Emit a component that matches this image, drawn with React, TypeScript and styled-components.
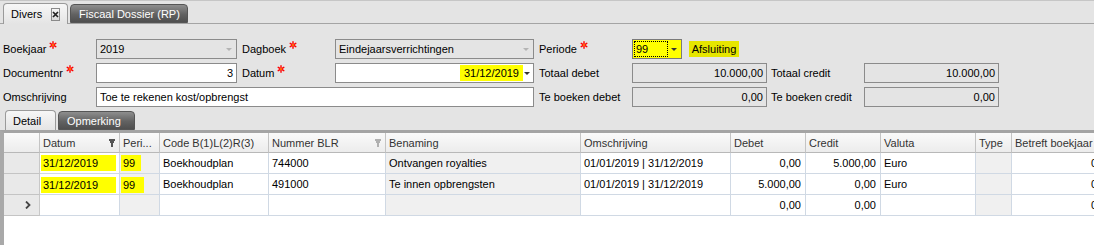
import React from "react";
import styled, { createGlobalStyle } from "styled-components";

const GlobalStyle = createGlobalStyle`
  html, body {
    margin: 0;
    padding: 0;
    background: #e4e4e4;
    overflow: hidden;
  }
  body {
    font-family: "Liberation Sans", Arial, sans-serif;
    font-size: 11px;
    color: #000;
  }
`;

const COLUMNS = "36px 80px 40px 109px 117px 195px 150px 75px 75px 95px 36px 90px";

const Page = styled.div`
  width: 1094px;
  height: 245px;
  overflow: hidden;
  display: flex;
  flex-direction: column;
`;

const TabStrip = styled.div`
  height: 22px;
  border-top: 1px solid #c6c6c6;
  border-bottom: 1px solid #a4a4a4;
  display: flex;
  align-items: flex-end;
  gap: 2px;
  padding-left: 3px;
`;

const Tab = styled.div<{ $active?: boolean; $width?: number }>`
  position: relative;
  box-sizing: border-box;
  width: ${(p) => (p.$width ? `${p.$width}px` : "auto")};
  height: ${(p) => (p.$active ? 21 : 19)}px;
  margin-bottom: ${(p) => (p.$active ? -1 : 0)}px;
  display: flex;
  align-items: center;
  padding: 0 7px 0 ${(p) => (p.$active ? 7 : 8)}px;
  border: 1px solid ${(p) => (p.$active ? "#9a9a9a" : "#555")};
  border-bottom: ${(p) => (p.$active ? "none" : "1px solid #555")};
  border-radius: 4px 4px 0 0;
  background: ${(p) =>
    p.$active
      ? "linear-gradient(#f7f7f7, #e4e4e4)"
      : "linear-gradient(#8e8e8e, #626262 55%, #4f4f4f)"};
  color: ${(p) => (p.$active ? "#000" : "#fff")};
  white-space: nowrap;
`;

const CloseBox = styled.span`
  box-sizing: border-box;
  width: 13px;
  height: 13px;
  margin-left: 9px;
  border: 1px solid #8a8a8a;
  background: linear-gradient(#f6f6f6, #dadada);
  display: flex;
  align-items: center;
  justify-content: center;
`;

const Form = styled.div`
  display: grid;
  grid-template-columns: 93px 141px 98px 199px 98px 135px 97px 135px;
  grid-auto-rows: 20px;
  row-gap: 4px;
  margin-top: 15px;
  padding-left: 3px;
`;

const Label = styled.div<{ $indent?: number }>`
  display: flex;
  align-items: center;
  padding-left: ${(p) => p.$indent ?? 0}px;
  white-space: nowrap;
`;

const Star = styled.svg`
  align-self: flex-start;
  margin: 2px 0 0 3px;
`;

const Field = styled.div<{ $tone?: "white" | "gray"; $right?: boolean; $span?: string }>`
  box-sizing: border-box;
  height: 20px;
  border: 1px solid #8b8b8b;
  background: ${(p) => (p.$tone === "white" ? "#fff" : "#e4e4e4")};
  display: flex;
  align-items: center;
  justify-content: ${(p) => (p.$right ? "flex-end" : "flex-start")};
  padding: 0 3px;
  white-space: nowrap;
  overflow: hidden;
  ${(p) => (p.$span ? `grid-column: ${p.$span};` : "")}
`;

const Arrow = styled.span<{ $dim?: boolean }>`
  width: 0;
  height: 0;
  margin-left: auto;
  margin-right: 1px;
  border-left: 3px solid transparent;
  border-right: 3px solid transparent;
  border-top: 3px solid ${(p) => (p.$dim ? "#b4b4b4" : "#333")};
`;

const FieldMark = styled.span`
  background: #ffff00;
  height: 16px;
  line-height: 16px;
  padding: 0 4px;
  margin-right: 1px;
`;

const PeriodRow = styled.div`
  display: flex;
  align-items: center;
  grid-column: 6 / 8;
`;

const Combo = styled.div`
  box-sizing: border-box;
  width: 50px;
  height: 20px;
  border: 1px solid #7a7a7a;
  background: #ffff00;
  display: flex;
  align-items: center;
  padding: 0 3px 0 1px;
`;

const FocusBox = styled.span`
  box-sizing: border-box;
  width: 34px;
  height: 16px;
  line-height: 14px;
  border: 1px dotted #000;
  padding-left: 1px;
`;

const StatusTag = styled.span`
  margin-left: 7px;
  width: 50px;
  height: 16px;
  line-height: 16px;
  text-align: center;
  background: #e6e600;
`;

const SubTabs = styled.div`
  height: 20px;
  margin-top: 3px;
  display: flex;
  align-items: flex-end;
  gap: 2px;
  padding-left: 5px;
`;

const GridFrame = styled.div`
  flex: 1;
  display: flex;
  flex-direction: column;
  border-top: 3px solid #a4a4a4;
  border-left: 4px solid #a9a9a9;
  background: #fff;
  overflow: hidden;
`;

const GridRow = styled.div<{ $height: number }>`
  display: grid;
  grid-template-columns: ${COLUMNS};
  height: ${(p) => p.$height}px;
  width: max-content;
`;

const HeadCell = styled.div`
  box-sizing: border-box;
  display: flex;
  align-items: center;
  padding: 0 4px 0 3px;
  background: linear-gradient(#fafafa, #ececec);
  border-right: 1px solid #c4c4c4;
  border-bottom: 1px solid #b8b8b8;
  color: #333;
  white-space: nowrap;
  overflow: hidden;
`;

const Pin = styled.svg`
  margin-left: auto;
`;

const Cell = styled.div<{ $muted?: boolean; $right?: boolean; $indicator?: boolean }>`
  box-sizing: border-box;
  display: flex;
  align-items: center;
  justify-content: ${(p) => (p.$right || p.$indicator ? "flex-end" : "flex-start")};
  padding: ${(p) => (p.$indicator ? "0 8px 0 0" : p.$right ? "0 4px 0 3px" : "0 3px")};
  background: ${(p) => (p.$indicator ? "#e9e9e9" : p.$muted ? "#f0f0f0" : "#fff")};
  border-right: 1px solid ${(p) => (p.$indicator ? "#c8c8c8" : "#d0d9e4")};
  border-bottom: 1px solid ${(p) => (p.$indicator ? "#c4c4c4" : "#d0d9e4")};
  white-space: nowrap;
  overflow: hidden;
`;

const Marker = styled.span<{ $w: number; $shift?: number }>`
  display: inline-block;
  width: ${(p) => p.$w}px;
  height: 16px;
  line-height: 16px;
  margin-left: -2px;
  margin-top: ${(p) => p.$shift ?? 0}px;
  padding-left: 2px;
  box-sizing: border-box;
  background: #ffff00;
`;

const Filler = styled.div`
  flex: 1;
  background: #fff;
`;

const RequiredStar = () => (
  <Star width="8" height="8" viewBox="0 0 8 8">
    <g stroke="#f00" strokeWidth="1.4" strokeLinecap="round">
      <line x1="4" y1="0.8" x2="4" y2="7.2" />
      <line x1="1.2" y1="2.3" x2="6.8" y2="5.7" />
      <line x1="1.2" y1="5.7" x2="6.8" y2="2.3" />
    </g>
    <circle cx="4" cy="4" r="0.9" fill="#ff9a00" />
  </Star>
);

const FilterPin = ({ color }: { color: string }) => (
  <Pin width="6" height="8" viewBox="0 0 6 8">
    <path d="M0 0h6v2h-1v2h-1v4h-2v-4h-1v-2h-1z" fill={color} />
  </Pin>
);

type Row = {
  datum?: boolean;
  shift: number;
  nummer: string;
  benaming: string;
  omschrijving: string;
  debet: string;
  credit: string;
  valuta: string;
  current?: boolean;
};

const rows: Row[] = [
  {
    datum: true,
    shift: 0,
    nummer: "744000",
    benaming: "Ontvangen royalties",
    omschrijving: "01/01/2019 | 31/12/2019",
    debet: "0,00",
    credit: "5.000,00",
    valuta: "Euro",
  },
  {
    datum: true,
    shift: 2,
    nummer: "491000",
    benaming: "Te innen opbrengsten",
    omschrijving: "01/01/2019 | 31/12/2019",
    debet: "5.000,00",
    credit: "0,00",
    valuta: "Euro",
  },
  {
    shift: 0,
    nummer: "",
    benaming: "",
    omschrijving: "",
    debet: "0,00",
    credit: "0,00",
    valuta: "",
    current: true,
  },
];

const headers = [
  "",
  "Datum",
  "Peri...",
  "Code B(1)L(2)R(3)",
  "Nummer BLR",
  "Benaming",
  "Omschrijving",
  "Debet",
  "Credit",
  "Valuta",
  "Type",
  "Betreft boekjaar",
];

const App: React.FC = () => {
  return (
    <Page>
      <GlobalStyle />
      <TabStrip>
        <Tab $active $width={65}>
          Divers
          <CloseBox>
            <svg width="7" height="7" viewBox="0 0 7 7">
              <path d="M1 1l5 5M6 1l-5 5" stroke="#222" strokeWidth="1.7" />
            </svg>
          </CloseBox>
        </Tab>
        <Tab>Fiscaal Dossier (RP)</Tab>
      </TabStrip>

      <Form>
        <Label>
          Boekjaar
          <RequiredStar />
        </Label>
        <Field>
          2019
          <Arrow $dim />
        </Field>
        <Label $indent={5}>
          Dagboek
          <RequiredStar />
        </Label>
        <Field>
          Eindejaarsverrichtingen
          <Arrow $dim />
        </Field>
        <Label $indent={5}>
          Periode
          <RequiredStar />
        </Label>
        <PeriodRow>
          <Combo>
            <FocusBox>99</FocusBox>
            <Arrow />
          </Combo>
          <StatusTag>Afsluiting</StatusTag>
        </PeriodRow>
        <div />

        <Label>
          Documentnr
          <RequiredStar />
        </Label>
        <Field $tone="white" $right>
          3
        </Field>
        <Label $indent={5}>
          Datum
          <RequiredStar />
        </Label>
        <Field $tone="white" $right style={{ paddingRight: 2 }}>
          <FieldMark>31/12/2019</FieldMark>
          <Arrow style={{ marginLeft: 0 }} />
        </Field>
        <Label $indent={5}>Totaal debet</Label>
        <Field $right>10.000,00</Field>
        <Label $indent={4}>Totaal credit</Label>
        <Field $right>10.000,00</Field>

        <Label>Omschrijving</Label>
        <Field $tone="white" $span="2 / 5">
          Toe te rekenen kost/opbrengst
        </Field>
        <Label $indent={5}>Te boeken debet</Label>
        <Field $right>0,00</Field>
        <Label $indent={4}>Te boeken credit</Label>
        <Field $right>0,00</Field>
      </Form>

      <SubTabs>
        <Tab $active $width={51} style={{ height: 20, marginBottom: 0 }}>
          Detail
        </Tab>
        <Tab $width={77}>Opmerking</Tab>
      </SubTabs>

      <GridFrame>
        <GridRow $height={20}>
          {headers.map((h, i) => (
            <HeadCell key={i}>
              {h}
              {i === 1 && <FilterPin color="#555" />}
              {i === 4 && <FilterPin color="#b0b0b0" />}
            </HeadCell>
          ))}
        </GridRow>
        {rows.map((r, i) => (
          <GridRow $height={21} key={i}>
            <Cell $indicator>
              {r.current && (
                <svg width="6" height="8" viewBox="0 0 6 8">
                  <path d="M1 0.5l3.5 3.5l-3.5 3.5" stroke="#444" strokeWidth="1.8" fill="none" />
                </svg>
              )}
            </Cell>
            <Cell>
              {r.datum && (
                <Marker $w={i === 0 ? 78 : 76} $shift={r.shift}>
                  31/12/2019
                </Marker>
              )}
            </Cell>
            <Cell $muted>
              {r.datum && (
                <Marker $w={i === 0 ? 20 : 23} $shift={r.shift}>
                  99
                </Marker>
              )}
            </Cell>
            <Cell>{r.datum ? "Boekhoudplan" : ""}</Cell>
            <Cell>{r.nummer}</Cell>
            <Cell $muted>{r.benaming}</Cell>
            <Cell>{r.omschrijving}</Cell>
            <Cell $right>{r.debet}</Cell>
            <Cell $right>{r.credit}</Cell>
            <Cell>{r.valuta}</Cell>
            <Cell $muted />
            <Cell $right>0</Cell>
          </GridRow>
        ))}
        <Filler />
      </GridFrame>
    </Page>
  );
};

export default App;
